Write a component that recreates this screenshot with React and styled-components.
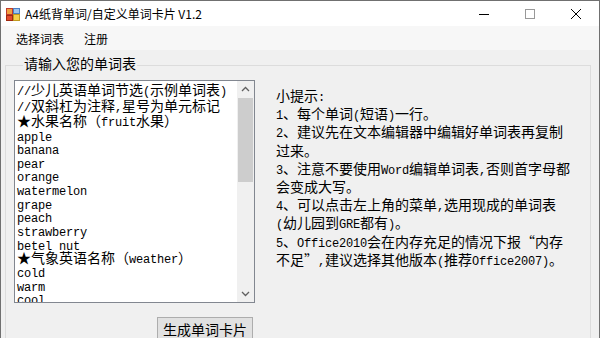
import React from "react"
import styled, { createGlobalStyle } from "styled-components"

const GlobalStyle = createGlobalStyle`
  html, body {
    margin: 0;
    padding: 0;
    background: #f0f0f0;
  }
  body {
    font-family: "Noto Sans CJK SC", "Noto Sans", sans-serif;
    color: #000;
  }
`

const Window = styled.div`
  width: 600px;
  height: 338px;
  box-sizing: border-box;
  border: 1px solid #707070;
  border-bottom: none;
  background: #f0f0f0;
  display: flex;
  flex-direction: column;
  overflow: hidden;
`

const TitleBar = styled.div`
  height: 25px;
  flex: none;
  display: flex;
  align-items: center;
  background: #fff;
`

const AppIcon = styled.svg`
  width: 16px;
  height: 16px;
  margin: 0 4px 0 4px;
  flex: none;
`

const Title = styled.div`
  flex: 1;
  font-size: 12px;
  line-height: 25px;
  white-space: nowrap;
`

const CaptionButton = styled.div`
  width: 46px;
  height: 25px;
  display: flex;
  align-items: center;
  justify-content: center;
  svg {
    width: 10px;
    height: 10px;
  }
`

const MenuBar = styled.div`
  height: 24px;
  flex: none;
  display: flex;
  align-items: flex-start;
  padding: 3px 0 0 6px;
  box-sizing: border-box;
  background: #f7f7f7;
`

const MenuItem = styled.div`
  font-size: 12px;
  line-height: 20px;
  padding: 0 9px 0 9px;
  margin-right: ${({ $gap }) => $gap || 0}px;
`

const Content = styled.div`
  flex: 1;
  padding: 5px 8px 0 4px;
  min-height: 0;
`

const GroupBox = styled.fieldset`
  margin: 0;
  padding: 5px 0 0 8px;
  border: 1px solid #dcdcdc;
  height: 320px;
  box-sizing: border-box;
  min-width: 0;
  display: flex;
`

const GroupLabel = styled.legend`
  padding: 0 1px 4px 1px;
  margin-left: 9px;
  font-size: 14px;
  line-height: 16px;
`

const Row = styled.div`
  display: flex;
  align-items: flex-start;
`

const LeftCol = styled.div`
  display: flex;
  flex-direction: column;
  align-items: flex-start;
`

const TextBox = styled.div`
  width: 241px;
  height: 223px;
  box-sizing: border-box;
  border: 1px solid #828790;
  background: #fff;
  display: flex;
  overflow: hidden;
`

const Lines = styled.div`
  flex: 1;
  padding: 0 0 0 2px;
  overflow: hidden;
`

const Line = styled.div`
  height: ${({ $h }) => $h}px;
  line-height: ${({ $h }) => $h}px;
  white-space: pre;
`

const Latin = styled.span`
  font-family: "Liberation Mono", "DejaVu Sans Mono", monospace;
  font-size: 12px;
  letter-spacing: -0.2px;
`

const Han = styled.span`
  font-family: "Noto Sans CJK SC", sans-serif;
  font-size: 14px;
`

const ScrollBar = styled.div`
  width: 17px;
  flex: none;
  display: flex;
  flex-direction: column;
  background: #f0f0f0;
`

const Arrow = styled.div`
  height: 17px;
  display: flex;
  align-items: center;
  justify-content: center;
  svg {
    width: 9px;
    height: 9px;
  }
`

const Track = styled.div`
  flex: 1;
  padding: 0 1px;
`

const Thumb = styled.div`
  height: 84px;
  background: #cdcdcd;
`

const Button = styled.div`
  margin: 14px 0 0 143px;
  width: 96px;
  height: 23px;
  box-sizing: border-box;
  border: 1px solid #adadad;
  background: #e1e1e1;
  display: flex;
  align-items: center;
  justify-content: center;
  font-size: 14px;
`

const Tips = styled.div`
  margin-left: 21px;
  padding-top: 5px;
`

const Mixed = ({ text }) =>
  text
    .split(/([\x00-\x7f]+)/)
    .filter(Boolean)
    .map((s, i) =>
      /^[\x00-\x7f]/.test(s) ? <Latin key={i}>{s}</Latin> : <Han key={i}>{s}</Han>
    )

const words = [
  "//少儿英语单词节选(示例单词表)",
  "//双斜杠为注释,星号为单元标记",
  "★水果名称（fruit水果）",
  "apple",
  "banana",
  "pear",
  "orange",
  "watermelon",
  "grape",
  "peach",
  "strawberry",
  "betel nut",
  "★气象英语名称（weather）",
  "cold",
  "warm",
  "cool",
]

const tips = [
  "小提示:",
  "1、每个单词(短语)一行。",
  "2、建议先在文本编辑器中编辑好单词表再复制",
  "过来。",
  "3、注意不要使用Word编辑单词表,否则首字母都",
  "会变成大写。",
  "4、可以点击左上角的菜单,选用现成的单词表",
  "(幼儿园到GRE都有)。",
  "5、Office2010会在内存充足的情况下报“内存",
  "不足”,建议选择其他版本(推荐Office2007)。",
]

export default function App() {
  return (
    <>
      <GlobalStyle />
      <Window>
        <TitleBar>
          <AppIcon viewBox="0 0 16 16">
            <rect x="1.5" y="2.5" width="6" height="6" fill="#f0a040" stroke="#c0392b" />
            <rect x="8.5" y="2.5" width="6" height="5" fill="#9cc3ef" stroke="#4a7fc0" />
            <rect x="1.5" y="9.5" width="6" height="5" fill="#e24a2c" stroke="#a02a10" />
            <rect x="8.5" y="8.5" width="6" height="6" fill="#f5d04a" stroke="#c09a20" />
          </AppIcon>
          <Title>A4纸背单词/自定义单词卡片 V1.2</Title>
          <CaptionButton>
            <svg viewBox="0 0 10 10">
              <path d="M0 5.5h10" stroke="#000" strokeWidth="1" />
            </svg>
          </CaptionButton>
          <CaptionButton>
            <svg viewBox="0 0 10 10">
              <rect x="0.5" y="0.5" width="9" height="9" fill="none" stroke="#999" />
            </svg>
          </CaptionButton>
          <CaptionButton>
            <svg viewBox="0 0 10 10">
              <path d="M0 0L10 10M10 0L0 10" stroke="#000" strokeWidth="1" />
            </svg>
          </CaptionButton>
        </TitleBar>
        <MenuBar>
          <MenuItem $gap={2}>选择词表</MenuItem>
          <MenuItem>注册</MenuItem>
        </MenuBar>
        <Content>
          <GroupBox>
            <GroupLabel>请输入您的单词表</GroupLabel>
            <Row>
              <LeftCol>
                <TextBox>
                  <Lines>
                    {words.map((w, i) => (
                      <Line key={i} $h={i < 3 ? 15.5 : 13.67}>
                        <Mixed text={w} />
                      </Line>
                    ))}
                  </Lines>
                  <ScrollBar>
                    <Arrow>
                      <svg viewBox="0 0 9 9">
                        <path d="M1 6L4.5 2.5L8 6" fill="none" stroke="#606060" strokeWidth="1.3" />
                      </svg>
                    </Arrow>
                    <Track>
                      <Thumb />
                    </Track>
                    <Arrow>
                      <svg viewBox="0 0 9 9">
                        <path d="M1 3L4.5 6.5L8 3" fill="none" stroke="#606060" strokeWidth="1.3" />
                      </svg>
                    </Arrow>
                  </ScrollBar>
                </TextBox>
                <Button>生成单词卡片</Button>
              </LeftCol>
              <Tips>
                {tips.map((t, i) => (
                  <Line key={i} $h={18.2}>
                    <Mixed text={t} />
                  </Line>
                ))}
              </Tips>
            </Row>
          </GroupBox>
        </Content>
      </Window>
    </>
  )
}
